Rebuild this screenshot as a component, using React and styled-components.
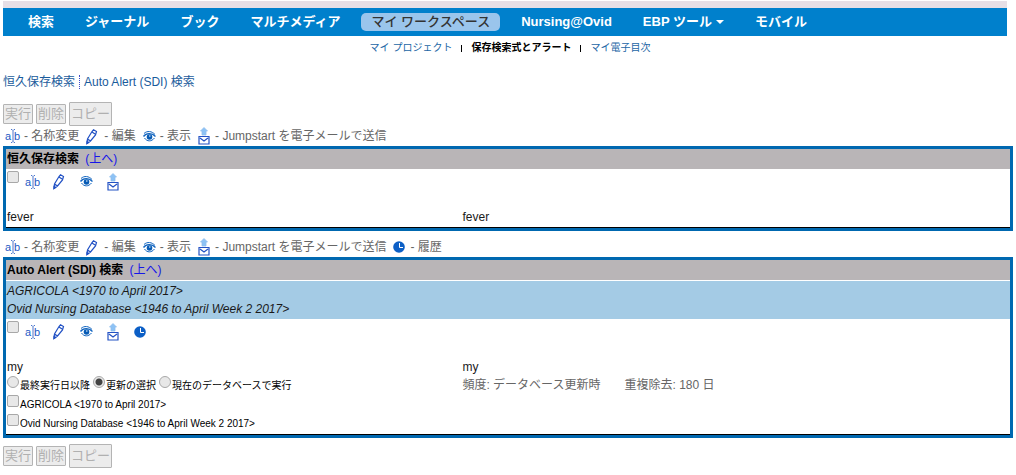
import React from 'react';
import styled, { createGlobalStyle, css } from 'styled-components';

const GlobalStyle = createGlobalStyle`
  body {
    margin: 0;
    background: #fff;
    color: #1a1a1a;
    font-family: "Liberation Sans", "Noto Sans CJK JP", sans-serif;
    font-size: 12px;
    line-height: 18px;
  }
`;

const Page = styled.div`
  padding: 1px 3px 0;
`;

const Header = styled.header`
  margin-right: 6px;
  border-top: 7px solid #e6dfe6;
`;

const Nav = styled.nav`
  display: flex;
  align-items: center;
  gap: 11px;
  height: 28px;
  padding-left: 15px;
  background: #0080cc;
`;

const NavLink = styled.a`
  display: flex;
  align-items: center;
  gap: 4px;
  padding: 0 10px;
  border-radius: 5px;
  color: #fff;
  font-size: 13px;
  font-weight: bold;
  line-height: 18px;
  text-decoration: none;
  white-space: nowrap;

  ${({ $active }) => $active && css`
    background: #9ac5ec;
    color: #333;
    font-weight: 500;
  `}
`;

const Caret = styled.span`
  border: 4px solid transparent;
  border-top-color: #fff;
  border-bottom: 0;
`;

const SubNav = styled.nav`
  display: flex;
  justify-content: center;
  gap: 9px;
  padding: 3px 0 0 10px;
  font-size: 10px;
`;

const SubLink = styled.a`
  color: ${({ $active }) => ($active ? '#000' : '#1b66a5')};
  font-weight: ${({ $active }) => ($active ? 'bold' : 'normal')};
  text-decoration: none;
`;

const Bar = styled.span`
  align-self: center;
  width: 1px;
  height: 7px;
  background: #000;
`;

const Jump = styled.nav`
  display: flex;
  align-items: center;
  gap: 4px;
  margin: 16px 0 11px;
`;

const JumpLink = styled.a`
  color: #1a5c9c;
  text-decoration: none;
`;

const Dots = styled.span`
  height: 14px;
  border-left: 1px dotted #3c4ccc;
`;

const Buttons = styled.div`
  display: flex;
  align-items: center;
  gap: 3px;
`;

const Button = styled.button`
  height: ${({ $large }) => ($large ? '24px' : '20px')};
  padding: 0 1px;
  border: 1px solid #b4b4b4;
  border-radius: 1px;
  background: #ececec;
  color: #b0b0b0;
  font-family: inherit;
  font-size: 13px;
  line-height: 16px;
`;

const Legend = styled.div`
  display: flex;
  align-items: center;
  height: 20px;
  padding-left: 3px;
  color: #666;
`;

const LegendItem = styled.span`
  display: flex;
  align-items: center;
  gap: 4px;
  margin-right: 7px;
`;

const Panel = styled.section`
  margin-bottom: 6px;
  border: 3px solid #0068b0;
`;

const PanelTitle = styled.h2`
  margin: 0;
  padding: 0 1px;
  background: #b9b5b7;
  color: #000;
  font-size: 12px;
  line-height: 20px;
`;

const TopLink = styled.a`
  margin-left: 3px;
  color: #1616e8;
  font-weight: normal;
  text-decoration: none;
`;

const Databases = styled.div`
  margin-top: 1px;
  padding: 1px;
  background: #a4cbe5;
  font-style: italic;
`;

const PanelBody = styled.div`
  padding: 2px 1px 1px;
  border-bottom: 1px solid #000;
`;

const Actions = styled.div`
  display: flex;
  align-items: center;
  height: 21px;
  margin-bottom: 16px;
`;

const IconButton = styled.button`
  display: flex;
  width: 27px;
  padding: 0 0 0 7px;
  border: 0;
  background: none;
`;

const Columns = styled.div`
  display: grid;
  grid-template-columns: 5fr 6fr;
`;

const Muted = styled.div`
  display: flex;
  gap: 24px;
  color: #666;
`;

const Options = styled.div`
  display: flex;
  gap: 3px;
`;

const Option = styled.label`
  display: flex;
  align-items: center;
  gap: 1px;
  height: 19px;
  color: #000;
  font-size: 10px;
  white-space: nowrap;
`;

const Tick = styled.input`
  appearance: none;
  flex: none;
  align-self: flex-start;
  width: 12px;
  height: 12px;
  margin: 0;
  border: 1px solid #a8a8a8;
  border-radius: ${({ type }) => (type === 'radio' ? '50%' : '2px')};
  background: #e8e8e8;

  &[type='radio']:checked {
    background: radial-gradient(circle, #444 3px, #e8e8e8 4px);
  }
`;

const Svg = styled.svg`
  flex: none;
  overflow: visible;
`;

function RenameIcon() {
  return (
    <Svg width="14" height="14" fill="#2459c4" fontSize="11" fontFamily="Liberation Sans, sans-serif">
      <text x="-1" y="11">a</text>
      <text x="8" y="11">b</text>
      <path d="M5 .5h1l1 1 1-1h1M7 1.5v11M5 13.5h1l1-1 1 1h1" fill="none" stroke="#4d78cc" />
    </Svg>
  );
}

function EditIcon() {
  return (
    <Svg width="14" height="15" fill="none" stroke="#2050c4" strokeWidth="1.2">
      <path d="M7.500 .8 10.500 2.500 9.500 6 4.500 12 1 14.500 1.500 10 6 2.500zM6 3l3 2M1.500 10l3 2" />
      <path d="M1 14.500v-2l1.500 1z" fill="#2050c4" />
    </Svg>
  );
}

function ViewIcon() {
  return (
    <Svg width="13" height="11" fill="none" stroke="#1265c0">
      <path d="M1 2.500C4 -.5 9 0 12 3.500" />
      <path d="M.5 5.500C3 2 9 1.500 12.500 5.500" strokeWidth="1.3" />
      <path d="M1.500 7C4 10.800 8.500 10.800 11.500 7" />
      <circle cx="6.500" cy="6" r="2.800" fill="#075bb5" stroke="none" />
      <path d="M6 5h1.500" stroke="#fff" />
    </Svg>
  );
}

function MailIcon() {
  return (
    <Svg width="13" height="18">
      <path d="M6 .5 9.500 4H8v4H4V4H2.500z" fill="#8cc2f5" stroke="#8fbdec" strokeWidth=".8" />
      <path d="M1 9.500h10v7.500H1zM2 11l4 3 4-3" fill="none" stroke="#2352c4" strokeWidth="1.2" />
    </Svg>
  );
}

function HistoryIcon() {
  return (
    <Svg width="13" height="12">
      <circle cx="6" cy="6" r="5.800" fill="#0c5fc6" />
      <path d="M6.500 2v4.500H10" fill="none" stroke="#fff" />
    </Svg>
  );
}

const actions = [
  { name: '名称変更', Icon: RenameIcon },
  { name: '編集', Icon: EditIcon },
  { name: '表示', Icon: ViewIcon },
  { name: 'Jumpstart を電子メールで送信', Icon: MailIcon },
  { name: '履歴', Icon: HistoryIcon },
];

const navItems = ['検索', 'ジャーナル', 'ブック', 'マルチメディア', 'マイ ワークスペース', 'Nursing@Ovid', 'EBP ツール', 'モバイル'];

const databases = ['AGRICOLA <1970 to April 2017>', 'Ovid Nursing Database <1946 to April Week 2 2017>'];

function ButtonRow() {
  return (
    <Buttons>
      <Button type="button">実行</Button>
      <Button type="button">削除</Button>
      <Button type="button" $large>コピー</Button>
    </Buttons>
  );
}

function ActionLegend({ items }) {
  return (
    <Legend>
      {items.map(({ name, Icon }) => (
        <LegendItem key={name}>
          <Icon />
          <span>- {name}</span>
        </LegendItem>
      ))}
    </Legend>
  );
}

function ActionRow({ items, label }) {
  return (
    <Actions>
      <Tick type="checkbox" aria-label={label} />
      {items.map(({ name, Icon }) => (
        <IconButton type="button" key={name} aria-label={name}>
          <Icon />
        </IconButton>
      ))}
    </Actions>
  );
}

function App() {
  return (
    <Page id="top">
      <GlobalStyle />
      <Header>
        <Nav>
          {navItems.map((item) => (
            <NavLink href="#" key={item} $active={item === 'マイ ワークスペース'}>
              {item}
              {item === 'EBP ツール' && <Caret />}
            </NavLink>
          ))}
        </Nav>
        <SubNav>
          <SubLink href="#">マイ プロジェクト</SubLink>
          <Bar />
          <SubLink href="#" $active>保存検索式とアラート</SubLink>
          <Bar />
          <SubLink href="#">マイ電子目次</SubLink>
        </SubNav>
      </Header>

      <Jump>
        <JumpLink href="#saved">恒久保存検索</JumpLink>
        <Dots />
        <JumpLink href="#alerts">Auto Alert (SDI) 検索</JumpLink>
      </Jump>

      <ButtonRow />
      <ActionLegend items={actions.slice(0, 4)} />
      <Panel id="saved">
        <PanelTitle>恒久保存検索 <TopLink href="#top">(上へ)</TopLink></PanelTitle>
        <PanelBody>
          <ActionRow items={actions.slice(0, 4)} label="fever" />
          <Columns>
            <div>fever</div>
            <div>fever</div>
          </Columns>
        </PanelBody>
      </Panel>

      <ActionLegend items={actions} />
      <Panel id="alerts">
        <PanelTitle>Auto Alert (SDI) 検索 <TopLink href="#top">(上へ)</TopLink></PanelTitle>
        <Databases>
          {databases.map((db) => <div key={db}>{db}</div>)}
        </Databases>
        <PanelBody>
          <ActionRow items={actions} label="my" />
          <Columns>
            <div>
              <div>my</div>
              <Options>
                <Option><Tick type="radio" name="range" />最終実行日以降</Option>
                <Option><Tick type="radio" name="range" defaultChecked />更新の選択</Option>
                <Option><Tick type="radio" name="range" />現在のデータベースで実行</Option>
              </Options>
              {databases.map((db) => (
                <Option key={db}><Tick type="checkbox" />{db}</Option>
              ))}
            </div>
            <div>
              <div>my</div>
              <Muted>
                <span>頻度: データベース更新時</span>
                <span>重複除去: 180 日</span>
              </Muted>
            </div>
          </Columns>
        </PanelBody>
      </Panel>
      <ButtonRow />
    </Page>
  );
}

export default App;
